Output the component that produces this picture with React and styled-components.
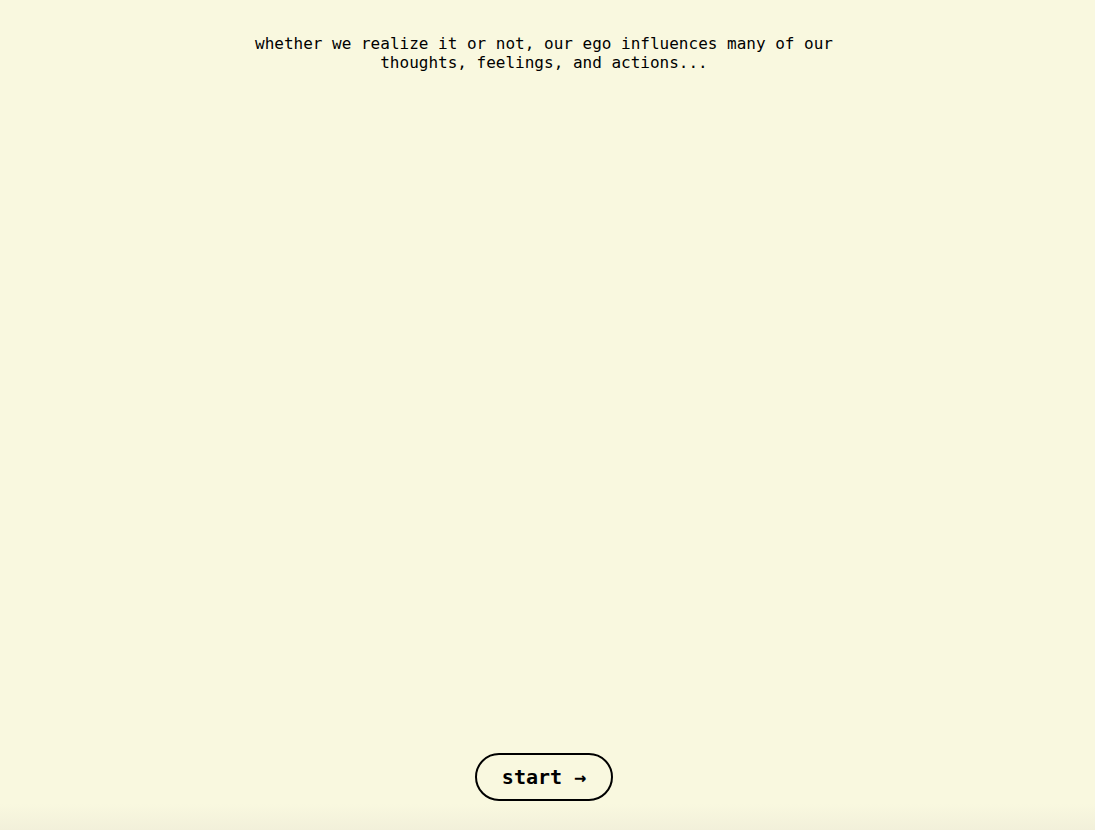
import React from 'react';
import styled, { createGlobalStyle } from 'styled-components';

const Global = createGlobalStyle`
  html, body {
    margin: 0;
    padding: 0;
    background: #f9f8df;
  }
  #root {
    min-height: 100vh;
  }
`;

const Page = styled.div`
  min-height: 100vh;
  display: flex;
  flex-direction: column;
  align-items: center;
  padding-right: 7px;
  box-sizing: border-box;
  font-family: "DejaVu Sans Mono", "Liberation Mono", monospace;
  color: #000;
  background: linear-gradient(to bottom, #f9f8df 0, #f9f8df calc(100% - 26px), #f2f0da 100%);
`;

const Intro = styled.p`
  margin: 34px 0 0;
  max-width: 620px;
  font-size: 16px;
  line-height: 19px;
  text-align: center;
`;

const Spacer = styled.div`
  flex: 1;
`;

const StartButton = styled.button`
  margin-bottom: 29px;
  width: 138px;
  height: 48px;
  padding: 0;
  border: 2px solid #000;
  border-radius: 24px;
  background: transparent;
  font-family: "DejaVu Sans Mono", "Liberation Mono", monospace;
  font-weight: bold;
  font-size: 20px;
  color: #000;
  cursor: pointer;
  white-space: pre;
`;

const App = () => {
  return (
    <>
      <Global />
      <Page>
        <Intro>
          whether we realize it or not, our ego influences many of our thoughts, feelings, and actions...
        </Intro>
        <Spacer />
        <StartButton>start →</StartButton>
      </Page>
    </>
  );
};

export default App;
